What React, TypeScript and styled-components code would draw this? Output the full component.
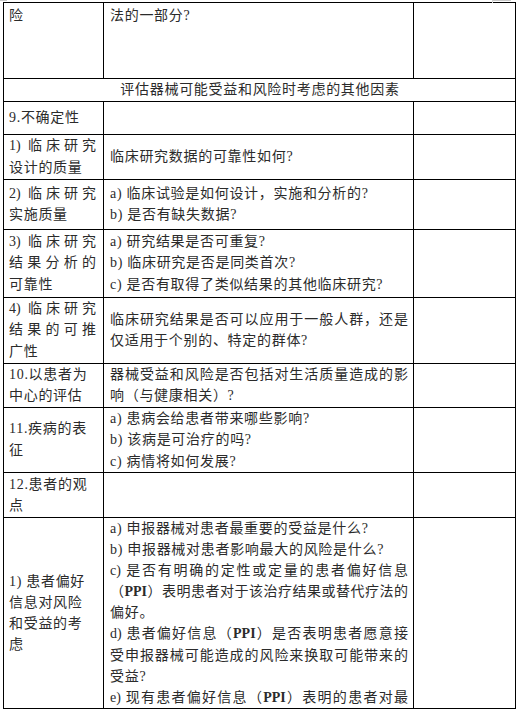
import React from 'react';
import styled, { createGlobalStyle } from 'styled-components';

const GlobalStyle = createGlobalStyle`
  html, body {
    margin: 0;
    padding: 0;
    background: #ffffff;
  }
  body {
    font-family: 'Liberation Serif', 'Noto Sans CJK SC', serif;
    color: #2b2b2b;
  }
`;

const Page = styled.div`
  position: relative;
  width: 517px;
  height: 709px;
  overflow: hidden;
  padding: 2px 0 0 3px;
  box-sizing: border-box;
`;

const CornerMark = styled.div<{ $side: 'left' | 'right' }>`
  position: absolute;
  top: 0;
  ${(p) => (p.$side === 'left' ? 'left: 0; width: 7px;' : 'left: 492px; width: 19px;')}
  height: 3px;
  border-top: 1px solid #c8c8c8;
  ${(p) => (p.$side === 'right' ? 'border-left: 1px solid #d4d4d4;' : '')}
  box-sizing: border-box;
`;

const Table = styled.table`
  width: 512px;
  table-layout: fixed;
  border-collapse: collapse;
  font-family: 'Liberation Serif', 'Noto Sans CJK SC', serif;
  font-size: 14px;
  line-height: 21.5px;
  color: #2b2b2b;
`;

const Row = styled.tr<{ $h: number }>`
  height: ${(p) => p.$h}px;
`;

const Cell = styled.td<{ $top?: boolean; $col: 1 | 2 | 3; $center?: boolean; $dense?: boolean }>`
  border: 1px solid #000;
  vertical-align: ${(p) => (p.$top ? 'top' : 'middle')};
  padding: ${(p) => (p.$top ? '2px' : '0')} ${(p) => (p.$col === 1 ? '7px' : '5px')} 0
    ${(p) => (p.$col === 1 ? '5px' : '6px')};
  text-align: ${(p) => (p.$center ? 'center' : 'left')};
  line-height: ${(p) => (p.$dense ? '21.1px' : '21.5px')};
  overflow: hidden;
`;

const Line = styled.div<{ $justify?: boolean }>`
  letter-spacing: ${(p) => (p.$justify ? '0' : '0.7px')};
  text-align: ${(p) => (p.$justify ? 'justify' : 'inherit')};
  text-align-last: ${(p) => (p.$justify ? 'justify' : 'auto')};
  white-space: ${(p) => (p.$justify ? 'normal' : 'nowrap')};
`;

const Bold = styled.span`
  font-weight: 700;
  letter-spacing: 0;
`;

type L = string | { t: string; j: true };
const J = (t: string): L => ({ t, j: true });

interface RowData {
  h: number;
  left: L[];
  mid: L[];
  dense?: boolean;
}

const rows: RowData[] = [
  { h: 33, left: ['9.不确定性'], mid: [] },
  { h: 45, left: [J('1) 临床研究'), '设计的质量'], mid: ['临床研究数据的可靠性如何?'] },
  {
    h: 50,
    left: [J('2) 临床研究'), '实施质量'],
    mid: ['a) 临床试验是如何设计，实施和分析的?', 'b) 是否有缺失数据?'],
  },
  {
    h: 68,
    left: [J('3) 临床研究'), J('结果分析的'), '可靠性'],
    mid: ['a) 研究结果是否可重复?', 'b) 临床研究是否是同类首次?', 'c) 是否有取得了类似结果的其他临床研究?'],
  },
  {
    h: 66,
    left: [J('4) 临床研究'), J('结果的可推'), '广性'],
    mid: [J('临床研究结果是否可以应用于一般人群，还是'), '仅适用于个别的、特定的群体?'],
  },
  {
    h: 43,
    left: ['10.以患者为', '中心的评估'],
    mid: [J('器械受益和风险是否包括对生活质量造成的影'), '响（与健康相关）?'],
  },
  {
    h: 65,
    left: ['11.疾病的表', '征'],
    mid: ['a) 患病会给患者带来哪些影响?', 'b) 该病是可治疗的吗?', 'c) 病情将如何发展?'],
  },
  { h: 45, left: ['12.患者的观', '点'], mid: [] },
  {
    h: 190,
    dense: true,
    left: ['1) 患者偏好', '信息对风险', '和受益的考', '虑'],
    mid: [
      'a) 申报器械对患者最重要的受益是什么?',
      'b) 申报器械对患者影响最大的风险是什么?',
      J('c) 是否有明确的定性或定量的患者偏好信息'),
      J('（PPI）表明患者对于该治疗结果或替代疗法的'),
      '偏好。',
      J('d) 患者偏好信息（PPI）是否表明患者愿意接'),
      J('受申报器械可能造成的风险来换取可能带来的'),
      '受益?',
      J('e) 现有患者偏好信息（PPI）表明的患者对最'),
    ],
  },
];

const withBold = (text: string) =>
  text.split(/(PPI)/).map((part, i) => (part === 'PPI' ? <Bold key={i}>PPI</Bold> : part));

const Lines: React.FC<{ lines: L[] }> = ({ lines }) => (
  <>
    {lines.map((l, i) =>
      typeof l === 'string' ? (
        <Line key={i}>{withBold(l)}</Line>
      ) : (
        <Line key={i} $justify>
          {withBold(l.t)}
        </Line>
      ),
    )}
  </>
);

export default function App() {
  return (
    <>
      <GlobalStyle />
      <Page>
        <CornerMark $side="left" />
        <CornerMark $side="right" />
        <Table>
          <colgroup>
            <col style={{ width: 100 }} />
            <col style={{ width: 310 }} />
            <col style={{ width: 102 }} />
          </colgroup>
          <tbody>
            <Row $h={76}>
              <Cell $col={1} $top>
                <Lines lines={['险']} />
              </Cell>
              <Cell $col={2} $top>
                <Lines lines={['法的一部分?']} />
              </Cell>
              <Cell $col={3} />
            </Row>
            <Row $h={22}>
              <Cell $col={2} colSpan={3} $center>
                <Lines lines={['评估器械可能受益和风险时考虑的其他因素']} />
              </Cell>
            </Row>
            {rows.map((r, i) => (
              <Row key={i} $h={r.h}>
                <Cell $col={1} $dense={r.dense}>
                  <Lines lines={r.left} />
                </Cell>
                <Cell $col={2} $dense={r.dense}>
                  <Lines lines={r.mid} />
                </Cell>
                <Cell $col={3} />
              </Row>
            ))}
          </tbody>
        </Table>
      </Page>
    </>
  );
}
